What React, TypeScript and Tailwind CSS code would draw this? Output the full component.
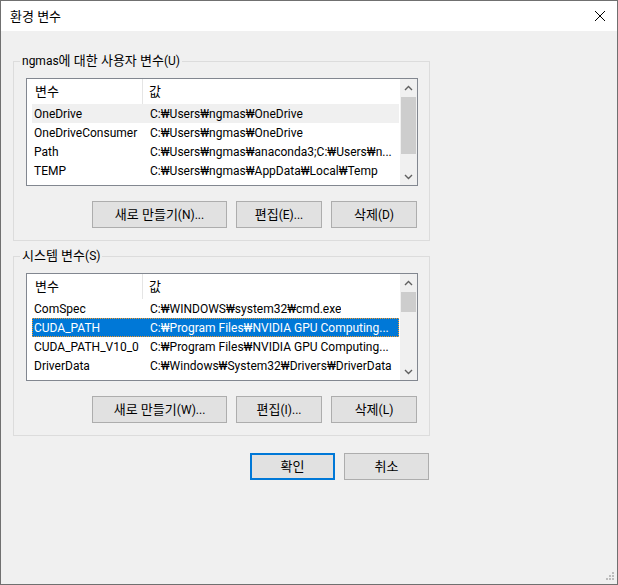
import React from "react";

const W = "\u20A9";

interface Row {
  name: string;
  value: string;
  state?: "hover" | "selected";
}

const userRows: Row[] = [
  { name: "OneDrive", value: `C:${W}Users${W}ngmas${W}OneDrive`, state: "hover" },
  { name: "OneDriveConsumer", value: `C:${W}Users${W}ngmas${W}OneDrive` },
  { name: "Path", value: `C:${W}Users${W}ngmas${W}anaconda3;C:${W}Users${W}n...` },
  { name: "TEMP", value: `C:${W}Users${W}ngmas${W}AppData${W}Local${W}Temp` },
];

const systemRows: Row[] = [
  { name: "ComSpec", value: `C:${W}WINDOWS${W}system32${W}cmd.exe` },
  { name: "CUDA_PATH", value: `C:${W}Program Files${W}NVIDIA GPU Computing...`, state: "selected" },
  { name: "CUDA_PATH_V10_0", value: `C:${W}Program Files${W}NVIDIA GPU Computing...` },
  { name: "DriverData", value: `C:${W}Windows${W}System32${W}Drivers${W}DriverData` },
];

// Korean glyphs render a touch larger than the latin ones in the original
const K = ({ children }: { children: React.ReactNode }) => <span className="text-[13px]">{children}</span>;

const Chevron = ({ up }: { up?: boolean }) => (
  <svg width="9" height="6" viewBox="0 0 9 6" className="block">
    <polyline
      points={up ? "1,5 4.5,1.5 8,5" : "1,1 4.5,4.5 8,1"}
      fill="none"
      stroke="#606060"
      strokeWidth="1.4"
    />
  </svg>
);

const Button: React.FC<{ children: React.ReactNode; w: string; primary?: boolean }> = ({ children, w, primary }) => (
  <button
    className={`${w} h-[27px] bg-[#e1e1e1] text-[12px] leading-none text-black flex items-center justify-center ${
      primary ? "border-2 border-[#0078d7]" : "border border-[#adadad]"
    }`}
  >
    {children}
  </button>
);

const ListView: React.FC<{ rows: Row[]; thumbH: string }> = ({ rows, thumbH }) => (
  <div className="w-[392px] h-[108px] border border-[#828790] bg-white flex overflow-hidden">
    <div className="w-[373px] flex flex-col">
      <div className="h-[25px] flex items-center shrink-0">
        <div className="w-[116px] pl-[8px] h-full flex items-center border-r border-[#e5e5e5]">
          <K>변수</K>
        </div>
        <div className="pl-[6px]">
          <K>값</K>
        </div>
      </div>
      {rows.map((r) => (
        <div
          key={r.name}
          className={`ml-[5px] w-[367px] h-[19px] shrink-0 flex items-center whitespace-nowrap overflow-hidden ${
            r.state === "selected"
              ? "bg-[#0078d7] text-white outline-1 outline-dotted outline-[#f39a2b] -outline-offset-1"
              : r.state === "hover"
              ? "bg-[#f0f0f0]"
              : ""
          }`}
        >
          <div className="w-[116px] pl-[2px] shrink-0 overflow-hidden">{r.name}</div>
          <div className="pl-[2px] overflow-hidden">{r.value}</div>
        </div>
      ))}
    </div>
    <div className="w-[17px] bg-[#f0f0f0] flex flex-col items-center">
      <div className="h-[17px] w-full flex items-center justify-center">
        <Chevron up />
      </div>
      <div className="flex-1 w-full px-[1px]">
        <div className={`mt-[1px] ${thumbH} w-[15px] bg-[#cdcdcd]`} />
      </div>
      <div className="h-[17px] w-full flex items-center justify-center">
        <Chevron />
      </div>
    </div>
  </div>
);

const Group: React.FC<{
  title: React.ReactNode;
  rows: Row[];
  keys: [string, string, string];
  thumbH: string;
  className?: string;
}> = ({ title, rows, keys, thumbH, className }) => (
  <fieldset className={`w-[417px] border border-[#dcdcdc] pl-[12px] pr-[11px] pb-[12px] ${className ?? ""}`}>
    <legend className="ml-[-6px] px-[2px] leading-[16px]">{title}</legend>
    <div className="mt-[9px]">
      <ListView rows={rows} thumbH={thumbH} />
    </div>
    <div className="mt-[15px] flex justify-end gap-[9px] pr-[1px]">
      <Button w="w-[135px]">
        <K>새로 만들기</K>({keys[0]})...
      </Button>
      <Button w="w-[86px]">
        <K>편집</K>({keys[1]})...
      </Button>
      <Button w="w-[86px]">
        <K>삭제</K>({keys[2]})
      </Button>
    </div>
  </fieldset>
);

export default function App() {
  return (
    <div className="relative w-[618px] h-[585px] border border-[#707070] bg-[#f0f0f0] text-[12px] text-black font-['Roboto','Noto_Sans_CJK_KR',sans-serif] flex flex-col overflow-hidden">
      <div className="h-[30px] bg-white flex items-center justify-between pl-[9px] pr-[10px] shrink-0">
        <span className="leading-none">
          <K>환경 변수</K>
        </span>
        <svg width="12" height="12" viewBox="0 0 12 12" className="mr-[1px]">
          <path d="M1 1 L11 11 M11 1 L1 11" stroke="#000" strokeWidth="1" />
        </svg>
      </div>
      <div className="pl-[12px] pt-[22px] flex flex-col">
        <Group
          title={
            <>
              ngmas<K>에 대한 사용자 변수</K>(U)
            </>
          }
          rows={userRows}
          keys={["N", "E", "D"]}
          thumbH="h-[57px]"
        />
        <Group
          className="mt-[7px]"
          title={
            <>
              <K>시스템 변수</K>(S)
            </>
          }
          rows={systemRows}
          keys={["W", "I", "L"]}
          thumbH="h-[20px]"
        />
        <div className="mt-[17px] w-[417px] flex justify-end gap-[9px] pr-[1px]">
          <Button w="w-[85px]" primary>
            <K>확인</K>
          </Button>
          <Button w="w-[85px]">
            <K>취소</K>
          </Button>
        </div>
      </div>
      <svg width="10" height="10" viewBox="0 0 10 10" className="absolute right-[2px] bottom-[2px]">
        <rect x="7" y="0" width="2" height="2" fill="#bcbcbc" />
        <rect x="4" y="3" width="2" height="2" fill="#bcbcbc" />
        <rect x="7" y="3" width="2" height="2" fill="#bcbcbc" />
        <rect x="1" y="6" width="2" height="2" fill="#bcbcbc" />
        <rect x="4" y="6" width="2" height="2" fill="#bcbcbc" />
        <rect x="7" y="6" width="2" height="2" fill="#bcbcbc" />
      </svg>
    </div>
  );
}
